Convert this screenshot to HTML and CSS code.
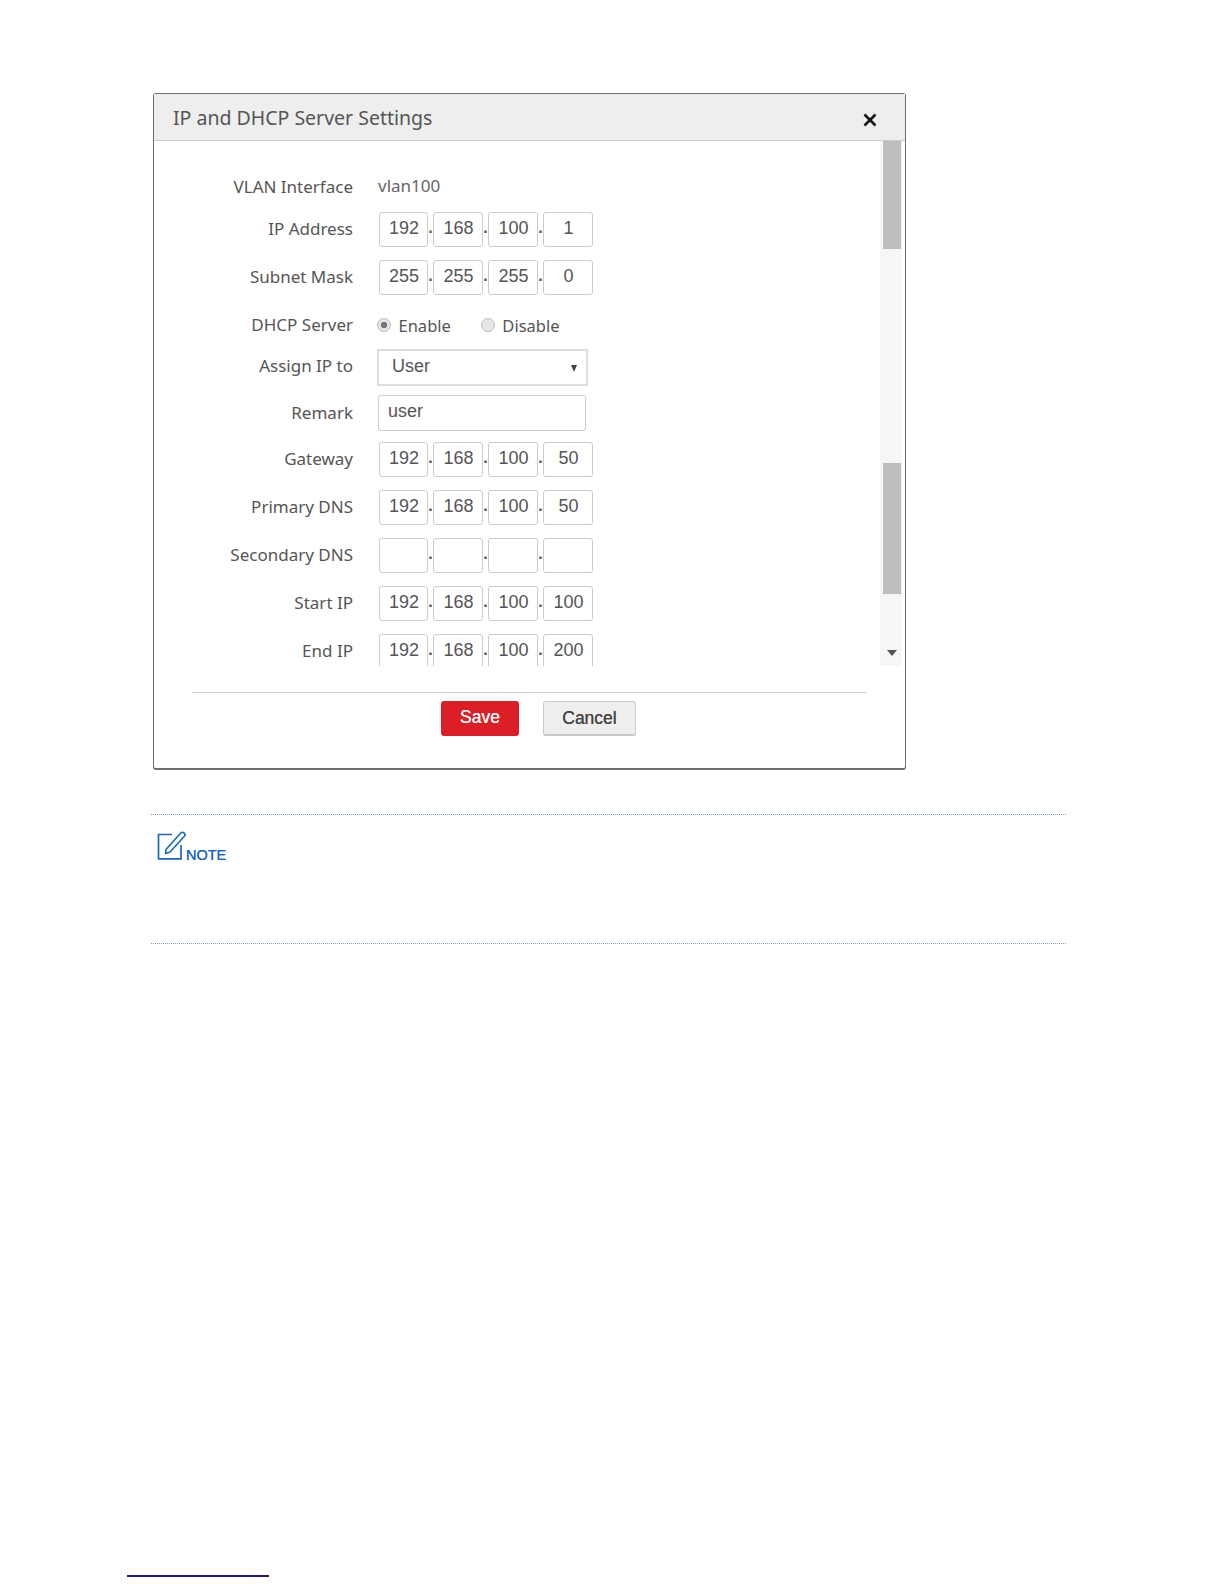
FILE: index.html
```html
<!DOCTYPE html>
<html lang="en">
<head>
<meta charset="utf-8">
<title>IP and DHCP Server Settings</title>
<link rel="stylesheet" href="styles.css">
</head>
<body>
<section class="dialog">
  <header class="dialog-head">
    <h1 class="dialog-title">IP and DHCP Server Settings</h1>
    <svg class="close" width="14" height="14" viewBox="0 0 14 14"><path d="M1.5 1.5 12.5 12.5M12.5 1.5 1.5 12.5" stroke="#111" stroke-width="2.6" fill="none"/></svg>
  </header>
  <div class="dialog-body">
    <form class="form">
      <div class="row row-vlan"><span class="label">VLAN Interface</span><span class="value">vlan100</span></div>
      <div class="row"><span class="label">IP Address</span><div class="ip"><span class="octet">192</span><span class="dot">.</span><span class="octet">168</span><span class="dot">.</span><span class="octet">100</span><span class="dot">.</span><span class="octet">1</span></div></div>
      <div class="row"><span class="label">Subnet Mask</span><div class="ip"><span class="octet">255</span><span class="dot">.</span><span class="octet">255</span><span class="dot">.</span><span class="octet">255</span><span class="dot">.</span><span class="octet">0</span></div></div>
      <div class="row row-radio"><span class="label">DHCP Server</span>
        <div class="radios">
          <span class="radio radio-on"></span><span class="radio-text">Enable</span>
          <span class="radio radio-off"></span><span class="radio-text">Disable</span>
        </div>
      </div>
      <div class="row row-select"><span class="label">Assign IP to</span><div class="select"><span>User</span><span class="caret"></span></div></div>
      <div class="row row-remark"><span class="label">Remark</span><div class="text-input">user</div></div>
      <div class="row"><span class="label">Gateway</span><div class="ip"><span class="octet">192</span><span class="dot">.</span><span class="octet">168</span><span class="dot">.</span><span class="octet">100</span><span class="dot">.</span><span class="octet">50</span></div></div>
      <div class="row"><span class="label">Primary DNS</span><div class="ip"><span class="octet">192</span><span class="dot">.</span><span class="octet">168</span><span class="dot">.</span><span class="octet">100</span><span class="dot">.</span><span class="octet">50</span></div></div>
      <div class="row"><span class="label">Secondary DNS</span><div class="ip"><span class="octet"></span><span class="dot">.</span><span class="octet"></span><span class="dot">.</span><span class="octet"></span><span class="dot">.</span><span class="octet"></span></div></div>
      <div class="row"><span class="label">Start IP</span><div class="ip"><span class="octet">192</span><span class="dot">.</span><span class="octet">168</span><span class="dot">.</span><span class="octet">100</span><span class="dot">.</span><span class="octet">100</span></div></div>
      <div class="row"><span class="label">End IP</span><div class="ip"><span class="octet">192</span><span class="dot">.</span><span class="octet">168</span><span class="dot">.</span><span class="octet">100</span><span class="dot">.</span><span class="octet">200</span></div></div>
    </form>
    <div class="scrollbar">
      <div class="thumb thumb-a"></div>
      <div class="thumb thumb-b"></div>
      <div class="arrow"></div>
    </div>
  </div>
  <footer class="dialog-foot">
    <div class="actions">
      <span class="btn btn-save">Save</span>
      <span class="btn btn-cancel">Cancel</span>
    </div>
  </footer>
</section>
<aside class="note">
  <div class="note-mark">
    <svg class="note-icon" width="30" height="30" viewBox="0 0 30 30"><path d="M15 4.5H1.5V28.8H24V15" fill="none" stroke="#1a66c4" stroke-width="1.7"/><path d="M9 19.5 23.8 3a2 2 0 0 1 3-.2l.6.6a2 2 0 0 1 0 2.8L13 22l-4.4 1.4Z" fill="none" stroke="#1a66c4" stroke-width="1.6" stroke-linejoin="round"/></svg>
    <span class="note-text">NOTE</span>
  </div>
</aside>
<div class="footnote-rule"></div>
</body>
</html>
```
FILE: styles.css
```css
html, body {
  margin: 0;
  padding: 0;
  background: #fff;
}
body {
  width: 1224px;
  height: 1584px;
  overflow: hidden;
  padding-top: 93px;
  box-sizing: border-box;
  font-family: "Noto Sans", sans-serif;
  color: #555;
}
.dialog {
  width: 753px;
  height: 677px;
  margin-left: 153px;
  box-sizing: border-box;
  border: 1px solid #6e6e6e;
  border-bottom-width: 2px;
  border-radius: 3px;
  display: flex;
  flex-direction: column;
  background: #fff;
}
.dialog-head {
  height: 47px;
  flex: none;
  box-sizing: border-box;
  display: flex;
  align-items: center;
  justify-content: space-between;
  padding: 0 28px 0 19px;
  background: #eee;
  border-bottom: 1px solid #ccc;
}
.dialog-title {
  margin: 0;
  font-size: 19.5px;
  font-weight: 400;
  color: #555;
}
.close {
  margin-top: 5px;
}
.dialog-body {
  display: flex;
  height: 525px;
  flex: none;
  overflow: hidden;
}
.form {
  width: 726px;
  flex: none;
  padding-top: 22px;
  box-sizing: border-box;
}
.row {
  display: flex;
  align-items: center;
  height: 48px;
}
.row-vlan { height: 42px; padding-top: 4px; box-sizing: border-box; }
.row-radio { height: 48px; }
.row-select { height: 41px; align-items: flex-start; box-sizing: border-box; }
.row-remark { height: 45px; }
.label {
  width: 199px;
  flex: none;
  box-sizing: border-box;
  text-align: right;
  font-size: 17px;
  color: #555;
  margin-right: 25px;
  padding-bottom: 2px;
}
.row-vlan .label, .row-remark .label { padding-bottom: 0; }
.row-select .label { line-height: 34px; padding-bottom: 0; }
.value {
  font-size: 17px;
  color: #666;
  margin-top: -2px;
}
.ip {
  display: flex;
  align-items: center;
  margin-left: 1px;
  font-family: "Liberation Sans", Arial, sans-serif;
}
.octet {
  width: 50px;
  height: 35px;
  box-sizing: border-box;
  border: 1px solid #ccc;
  border-radius: 3px;
  padding-left: 1px;
  font-size: 18px;
  line-height: 30px;
  text-align: center;
  color: #555;
}
.octet:first-child { width: 49px; }
.dot {
  width: 5px;
  text-align: center;
  font-size: 16px;
  font-weight: 700;
  line-height: 14px;
  padding-bottom: 3px;
  color: #555;
}
.radios {
  display: flex;
  align-items: center;
  font-size: 16.5px;
  color: #555;
  margin-left: -1px;
}
.radio {
  width: 14px;
  height: 14px;
  box-sizing: border-box;
  border-radius: 50%;
  border: 1px solid #bbb;
  background: #e6e6e6;
}
.radio-on {
  background: radial-gradient(circle, #777 0 3px, #e6e6e6 3.5px);
}
.radio-text { margin-left: 7.5px; }
.radio-text:nth-child(2) { margin-right: 30px; }
.select {
  width: 211px;
  height: 37px;
  margin-left: -1px;
  box-sizing: border-box;
  border: 2px solid #ddd;
  display: flex;
  align-items: center;
  justify-content: space-between;
  padding: 0 9px 2px 13px;
  font-family: "Liberation Sans", Arial, sans-serif;
  font-size: 18px;
  color: #555;
}
.caret {
  width: 0;
  height: 0;
  border-left: 3.5px solid transparent;
  border-right: 3.5px solid transparent;
  border-top: 7px solid #444;
  margin-top: 3px;
}
.text-input {
  width: 208px;
  height: 36px;
  box-sizing: border-box;
  border: 1px solid #ccc;
  border-radius: 3px;
  padding-left: 9px;
  font-family: "Liberation Sans", Arial, sans-serif;
  font-size: 18px;
  line-height: 30px;
  color: #555;
}
.scrollbar {
  width: 22px;
  flex: none;
  background: #f6f6f6;
  padding-left: 3px;
  box-sizing: border-box;
  display: flex;
  flex-direction: column;
}
.thumb {
  width: 18px;
  background: #bdbdbd;
  flex: none;
}
.thumb-a { height: 108px; }
.thumb-b { height: 131px; margin-top: 214px; }
.arrow {
  width: 0;
  height: 0;
  border-left: 5.5px solid transparent;
  border-right: 5.5px solid transparent;
  border-top: 6px solid #555;
  margin: 56px 0 0 4px;
}
.dialog-foot {
  padding: 26px 38px 0 38px;
}
.actions {
  border-top: 1px solid #ccc;
  width: 674px;
  padding-top: 8px;
  display: flex;
  gap: 24px;
  padding-left: 249px;
  box-sizing: border-box;
  font-family: "Liberation Sans", Arial, sans-serif;
}
.btn {
  height: 35px;
  box-sizing: border-box;
  border-radius: 3px;
  font-size: 17.5px;
  line-height: 33px;
  text-align: center;
}
.btn-save {
  width: 78px;
  background: #dc1f26;
  color: #fff;
  text-shadow: 0 0 .6px #fff;
}
.btn-cancel {
  width: 93px;
  background: #eee;
  border: 1px solid #ccc;
  border-bottom: 2px solid #c8c8c8;
  color: #444;
  line-height: 32px;
  text-shadow: 0 0 .5px #444;
}
.note {
  width: 915px;
  height: 130px;
  margin: 44px 0 0 151px;
  box-sizing: border-box;
  border-top: 1px dotted #7f9fbf;
  border-bottom: 1px dotted #7f9fbf;
  padding: 15px 0 0 6px;
}
.note-mark {
  display: flex;
  align-items: flex-end;
}
.note-icon {
  display: block;
  margin-right: -1px;
}
.note-text {
  font-family: "Liberation Sans", Arial, sans-serif;
  font-size: 14.5px;
  line-height: 14px;
  color: #1a66c4;
  margin-bottom: -2px;
  text-shadow: 0 0 .5px #1a66c4;
}
.footnote-rule {
  width: 142px;
  height: 2px;
  margin: 631px 0 0 127px;
  background: #1a1a80;
}
```
